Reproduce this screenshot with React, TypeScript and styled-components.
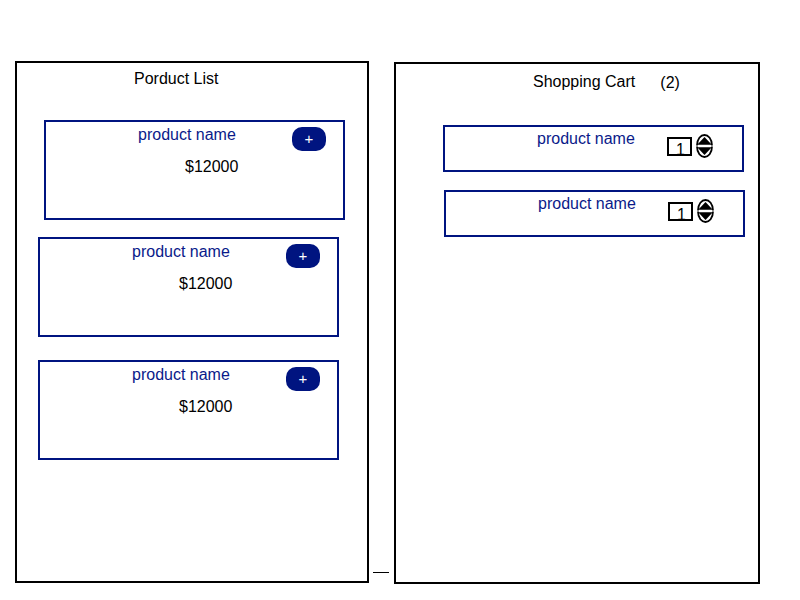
import React from "react";
import styled, { createGlobalStyle } from "styled-components";

const NAVY = "#001480";
const NAVY_TEXT = "#0a1a8a";

const Global = createGlobalStyle`
  html, body {
    margin: 0;
    padding: 0;
    background: #ffffff;
  }
  body {
    font-family: "Liberation Sans", Arial, sans-serif;
    font-size: 16px;
    color: #000000;
  }
  * { box-sizing: border-box; }
`;

const Page = styled.div`
  display: flex;
  align-items: flex-start;
  padding: 61px 0 0 15px;
  width: 800px;
  height: 600px;
`;

const Panel = styled.section<{ $w: number; $mt?: number }>`
  width: ${(p) => p.$w}px;
  height: 522px;
  margin-top: ${(p) => p.$mt ?? 0}px;
  border: 2px solid #000000;
  display: flex;
  flex-direction: column;
  align-items: flex-start;
`;

const PanelTitle = styled.div<{ $pl: number; $pt: number }>`
  display: flex;
  align-items: flex-start;
  padding: ${(p) => p.$pt}px 0 0 ${(p) => p.$pl}px;
  line-height: 18px;
  font-size: 16px;
  color: #000000;
`;

const Count = styled.span`
  margin-left: 25px;
  margin-top: 1px;
`;

const Separator = styled.div`
  width: 16px;
  height: 1px;
  background: #000000;
  margin: 511px 5px 0 4px;
`;

const ProductCard = styled.div<{ $ml: number; $mt: number }>`
  width: 301px;
  height: 100px;
  margin: ${(p) => p.$mt}px 0 0 ${(p) => p.$ml}px;
  border: 2px solid ${NAVY};
  display: flex;
  flex-direction: column;
`;

const CardRow = styled.div`
  display: flex;
  align-items: flex-start;
  padding: 4px 17px 0 92px;
`;

const Name = styled.span`
  color: ${NAVY_TEXT};
  line-height: 18px;
  font-size: 16px;
  flex: none;
`;

const AddButton = styled.button`
  margin-left: auto;
  margin-top: 1px;
  width: 34px;
  height: 24px;
  border: none;
  border-radius: 10px;
  background: ${NAVY};
  color: #ffffff;
  font-family: "Liberation Sans", Arial, sans-serif;
  font-size: 15px;
  line-height: 24px;
  padding: 0;
  display: flex;
  align-items: center;
  justify-content: center;
`;

const Price = styled.div`
  margin-top: 7px;
  padding-left: 139px;
  line-height: 18px;
  font-size: 16px;
  color: #000000;
`;

const CartItem = styled.div<{ $ml: number; $mt: number }>`
  width: 301px;
  height: 47px;
  margin: ${(p) => p.$mt}px 0 0 ${(p) => p.$ml}px;
  border: 2px solid ${NAVY};
  display: flex;
  align-items: flex-start;
  padding: 3px 29px 0 92px;
`;

const Qty = styled.div`
  margin-left: auto;
  display: flex;
  align-items: flex-start;
  flex: none;
`;

const QtyBox = styled.div`
  margin-top: 7px;
  width: 25px;
  height: 19px;
  flex: none;
  border: 2px solid #000000;
  padding: 2px 0 0 7px;
  font-size: 16px;
  line-height: 18px;
  color: #000000;
  overflow: visible;
  white-space: nowrap;
`;

const Spinner = styled.svg`
  margin-top: 4px;
  margin-left: 4px;
  display: block;
  flex: none;
`;

function SpinIcon() {
  return (
    <Spinner width="17" height="24" viewBox="0 0 17 24">
      <path
        d="M1 11.5 C1 5 4.8 1 8.5 1 C12.2 1 16 5 16 11.5"
        fill="none"
        stroke="#000"
        strokeWidth="1.8"
      />
      <path d="M8.5 3 L15.8 10.8 L1.2 10.8 Z" fill="#000" />
      <path
        d="M1 12.5 C1 19 4.8 23 8.5 23 C12.2 23 16 19 16 12.5"
        fill="none"
        stroke="#000"
        strokeWidth="1.8"
      />
      <path d="M1.2 13.2 L15.8 13.2 L8.5 21 Z" fill="#000" />
    </Spinner>
  );
}

const products = [
  { ml: 27, mt: 32 },
  { ml: 21, mt: 17 },
  { ml: 21, mt: 23 },
];

const cart = [
  { ml: 47, mt: 33 },
  { ml: 48, mt: 18 },
];

export default function App() {
  return (
    <>
      <Global />
      <Page>
        <Panel $w={354}>
          <PanelTitle $pl={117} $pt={7}>
            Porduct List
          </PanelTitle>
          {products.map((p, i) => (
            <ProductCard key={i} $ml={p.ml} $mt={p.mt}>
              <CardRow>
                <Name>product name</Name>
                <AddButton>+</AddButton>
              </CardRow>
              <Price>$12000</Price>
            </ProductCard>
          ))}
        </Panel>
        <Separator />
        <Panel $w={366} $mt={1}>
          <PanelTitle $pl={137} $pt={9}>
            Shopping Cart
            <Count>(2)</Count>
          </PanelTitle>
          {cart.map((c, i) => (
            <CartItem key={i} $ml={c.ml} $mt={c.mt}>
              <Name>product name</Name>
              <Qty>
                <QtyBox>1</QtyBox>
                <SpinIcon />
              </Qty>
            </CartItem>
          ))}
        </Panel>
      </Page>
    </>
  );
}
